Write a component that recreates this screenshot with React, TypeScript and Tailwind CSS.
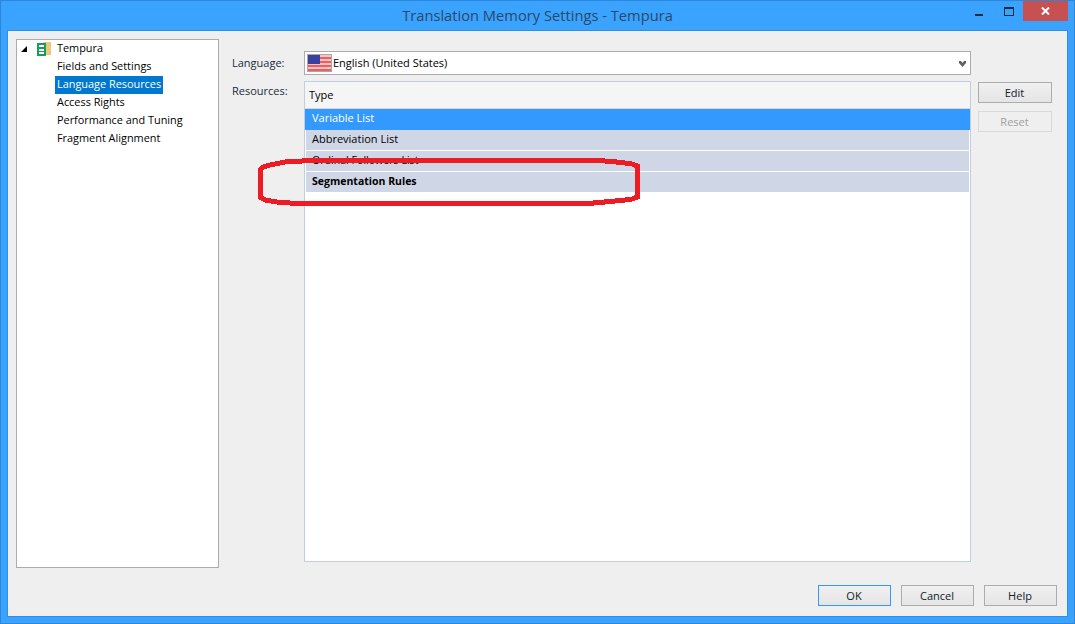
const treeItems = ['Fields and Settings', 'Language Resources', 'Access Rights', 'Performance and Tuning', 'Fragment Alignment'];

function Flag() {
  return (
    <svg width="25" height="18" viewBox="0 0 25 18" shapeRendering="crispEdges" className="shrink-0">
      <rect x="0" y="0" width="25" height="18" fill="#ffffff" />
      <rect x="0.5" y="0.5" width="24" height="17" fill="#f7c4c4" stroke="#a8a8a8" />
      <rect x="1" y="3" width="23" height="2" fill="#f25c5c" />
      <rect x="1" y="7" width="23" height="2" fill="#f25c5c" />
      <rect x="1" y="11" width="23" height="2" fill="#f25c5c" />
      <rect x="1" y="15" width="23" height="2" fill="#f25c5c" />
      <rect x="1" y="1" width="12" height="9" fill="#3b3f9e" />
    </svg>
  );
}

function DbIcon() {
  return (
    <svg width="14" height="14" viewBox="0 0 14 14" shapeRendering="crispEdges" className="shrink-0">
      <rect x="6" y="0" width="8" height="13" fill="#efc77c" />
      <rect x="0" y="1" width="9" height="13" fill="#1a9c5c" />
      <rect x="2" y="3" width="5" height="2" fill="#ffffff" />
      <rect x="2" y="7" width="5" height="2" fill="#ffffff" />
      <rect x="2" y="10" width="5" height="2" fill="#ffffff" />
    </svg>
  );
}

function Btn({ label, focused, disabled, narrow }: { label: string; focused?: boolean; disabled?: boolean; narrow?: boolean }) {
  const border = focused ? 'border-[#3399ff]' : disabled ? 'border-[#d9d9d9]' : 'border-[#acacac]';
  const bg = disabled ? 'bg-[#efefef] text-[#a0a0a0]' : 'bg-gradient-to-b from-[#f0f0f0] to-[#e5e5e5] text-[#10202c]';
  return (
    <div className={`flex h-[21px] items-center justify-center border pb-[1px] pr-[1px] ${narrow ? 'w-[73px]' : 'w-[74px]'} ${border} ${bg}`}>
      {label}
    </div>
  );
}

export default function App() {
  return (
    <div className="relative h-[624px] w-[1075px] overflow-hidden border border-[#2f86d6] bg-[#3aa2ff] font-['Open_Sans','Noto_Sans',sans-serif] text-[11px] leading-none text-black">
      {/* title bar */}
      <div className="flex h-[29px] items-center">
        <div className="flex-1 pl-[107px] text-center text-[14.7px] text-[#2b4a66]">Translation Memory Settings - Tempura</div>
        <div className="mr-[6px] flex h-[20px] items-start self-start">
          <div className="flex h-[20px] w-[27px] items-end justify-center pb-[5px] pr-[3px]">
            <div className="h-[2px] w-[8px] bg-[#1f2d3a]" />
          </div>
          <div className="flex h-[20px] w-[29px] items-center justify-center">
            <div className="h-[9px] w-[10px] border border-t-[2px] border-[#1f2d3a]" />
          </div>
          <div className="flex h-[20px] w-[45px] items-center justify-center bg-[#c75050]">
            <svg width="9" height="8" viewBox="0 0 9 8">
              <path d="M1 0.5 L8 7.5 M8 0.5 L1 7.5" stroke="#ffffff" strokeWidth="2" />
            </svg>
          </div>
        </div>
      </div>

      {/* client area */}
      <div className="mx-[6px] flex h-[587px] flex-col border border-[#2f8ee6] bg-[#efefef] pb-[10px] pl-[8px] pr-[10px] pt-[8px]">
        <div className="flex h-[530px] items-start">
          <div className="h-[529px] w-[203px] shrink-0 border border-[#acacac] bg-white pl-[4px]">
            <div className="flex h-[17px] items-center">
              <div className="mt-[1px] h-0 w-0 border-b-[6px] border-l-[6px] border-b-black border-l-transparent" />
              <div className="ml-[10px]"><DbIcon /></div>
              <span className="mb-[1px] ml-[6px] text-[10.9px]">Tempura</span>
            </div>
            <div className="ml-[34px] mt-[1px] flex flex-col items-start text-[10.9px]">
              {treeItems.map((t) => (
                <div
                  key={t}
                  className={`flex h-[18px] items-center px-[2px] pb-[1px] ${t === 'Language Resources' ? 'bg-[#0078d0] text-white' : ''}`}
                >
                  {t}
                </div>
              ))}
            </div>
          </div>

          <div className="ml-[13px] w-[72px] shrink-0 pt-[18px] text-[#1a2c3c]">
            <div className="h-[28px]">Language:</div>
            <div>Resources:</div>
          </div>

          <div className="w-[667px] shrink-0 pt-[12px]">
            <div className="flex h-[24px] items-center border border-[#acacac] bg-white pl-[2px] pr-[4px]">
              <Flag />
              <span className="mb-[2px] ml-[1px] flex-1">English (United States)</span>
              <svg width="7" height="6" viewBox="0 0 7 6" className="mt-[1px] shrink-0">
                <path d="M0 0 L2 0 L3.5 2 L5 0 L7 0 L7 2 L3.5 6 L0 2 Z" fill="#606060" />
              </svg>
            </div>
            <div className="mt-[6px] h-[481px] border border-[#bfcfdf] bg-white">
              <div className="flex h-[27px] items-center border-b border-[#d8d8d8] bg-[#f5f5f5] pb-[2px] pl-[4px]">Type</div>
              <div className="flex h-[21px] items-center bg-[#3399ff] pb-[4px] pl-[7px] text-white">Variable List</div>
              <div className="mx-[1px] flex h-[20px] items-center bg-[#cfd6e6] pb-[4px] pl-[6px]">Abbreviation List</div>
              <div className="mx-[1px] mt-[1px] flex h-[20px] items-center bg-[#cfd6e6] pb-[2px] pl-[6px] text-[10.6px]">Ordinal Followers List</div>
              <div className="mx-[1px] mt-[1px] flex h-[20px] items-center bg-[#cfd6e6] pb-[2px] pl-[6px] text-[10.5px] font-bold">Segmentation Rules</div>
            </div>
          </div>

          <div className="ml-[7px] flex shrink-0 flex-col gap-[8px] pt-[43px]">
            <Btn label="Edit" />
            <Btn label="Reset" disabled />
          </div>
        </div>

        <div className="mt-auto flex justify-end gap-[10px]">
          <Btn label="OK" focused narrow />
          <Btn label="Cancel" narrow />
          <Btn label="Help" narrow />
        </div>
      </div>

      {/* hand-drawn highlight over the list */}
      <svg className="absolute left-[-1px] top-[-1px]" width="1075" height="624" shapeRendering="crispEdges">
        <path
          d="M260 197 L260 170 L263 167 L270 165 L285 162 L310 160.5 L598 160.5 L612 161.5 L625 163 L632 164 L637.5 166 L637.5 197 L632 199 L625 200 L610 201.5 L588 203.5 L300 203.5 L280 202.5 L265 200 Z"
          fill="none"
          stroke="#ed1c24"
          strokeWidth="5"
        />
      </svg>
    </div>
  );
}
